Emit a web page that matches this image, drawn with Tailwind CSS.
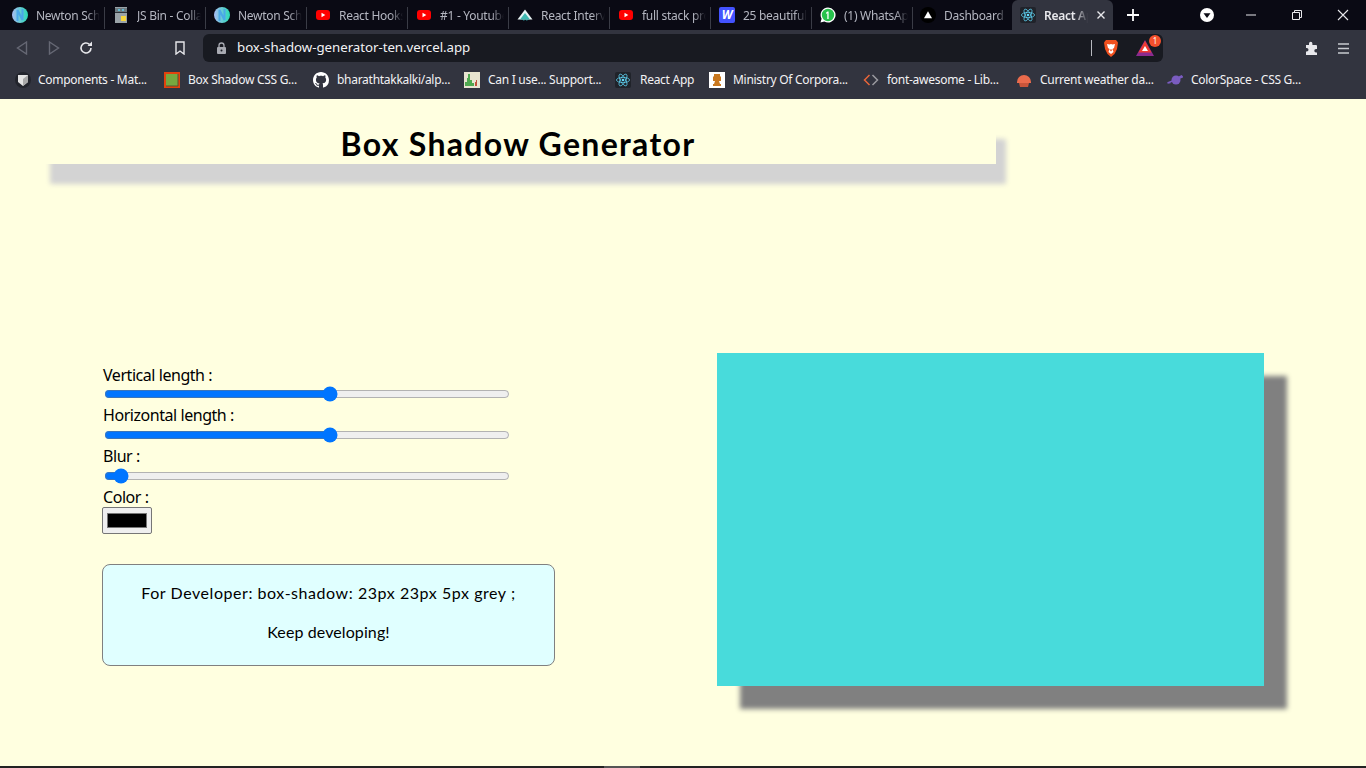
<!DOCTYPE html>
<html lang="en">
<head>
<meta charset="utf-8">
<title>React App</title>
<script src="https://cdn.jsdelivr.net/npm/@tailwindcss/browser@4"></script>
</head>
<body class="h-screen w-screen overflow-hidden flex flex-col bg-[#ffffe0] font-['Noto_Sans','Open_Sans',sans-serif] text-black">
<svg class="absolute w-0 h-0">
  <defs><linearGradient id="ng" x1="0" x2="1"><stop offset="0" stop-color="#a8bcf4"/><stop offset="1" stop-color="#28dcb4"/></linearGradient></defs>
  <symbol id="newton" viewBox="0 0 16 16"><circle cx="8" cy="8" r="8" fill="url(#ng)"/><path d="M5.500 14V3l5 10V2" fill="none" stroke="#4aa8e8" stroke-width="2"/></symbol>
  <symbol id="yt" viewBox="0 0 16 16"><rect x="1" y="3" width="14" height="10" rx="3" fill="#f00"/><path d="M6.500 5.800v4.400L10.300 8z" fill="#fff"/></symbol>
  <symbol id="react" viewBox="0 0 16 16"><rect width="16" height="16" rx="2" fill="#20232a"/><g fill="none" stroke="#61dafb" stroke-width=".7"><ellipse cx="8" cy="8" rx="6.600" ry="2.600"/><ellipse cx="8" cy="8" rx="6.600" ry="2.600" transform="rotate(60 8 8)"/><ellipse cx="8" cy="8" rx="6.600" ry="2.600" transform="rotate(120 8 8)"/></g><circle cx="8" cy="8" r="1.300" fill="#61dafb"/></symbol>
</svg>

<!-- Tab strip -->
<div class="h-[30px] shrink-0 bg-[#0a0a14] flex items-stretch pl-[4px] text-[12px] tracking-[-0.28px] text-[#b4b6c0] relative">
  <div class="w-[101px] relative flex items-center pl-[8px] after:absolute after:right-0 after:top-[7px] after:h-[22px] after:w-px after:bg-[#3a3c46]">
    <svg class="w-4 h-4 shrink-0" viewBox="0 0 16 16"><use href="#newton"/></svg>
    <span class="ml-[8px] pt-px w-[64px] overflow-hidden whitespace-nowrap [mask-image:linear-gradient(to_right,black_80%,transparent)]">Newton School</span>
  </div>
  <div class="w-[101px] relative flex items-center pl-[8px] after:absolute after:right-0 after:top-[7px] after:h-[22px] after:w-px after:bg-[#3a3c46]">
    <svg class="w-4 h-4 shrink-0" viewBox="0 0 16 16"><rect x="2" y="0" width="12" height="16" fill="#9aa3a8"/><rect x="2" y="5" width="12" height="1" fill="#2c3338"/><rect x="2" y="1" width="12" height="4" fill="#6d7a80"/><circle cx="6" cy="3" r="1" fill="#5fd0f0"/><circle cx="10" cy="3" r="1" fill="#5fd0f0"/><rect x="8" y="9" width="5" height="5" fill="#f5d63d"/></svg>
    <span class="ml-[8px] pt-px w-[64px] overflow-hidden whitespace-nowrap [mask-image:linear-gradient(to_right,black_80%,transparent)]">JS Bin - Collaborative</span>
  </div>
  <div class="w-[101px] relative flex items-center pl-[8px] after:absolute after:right-0 after:top-[7px] after:h-[22px] after:w-px after:bg-[#3a3c46]">
    <svg class="w-4 h-4 shrink-0" viewBox="0 0 16 16"><use href="#newton"/></svg>
    <span class="ml-[8px] pt-px w-[64px] overflow-hidden whitespace-nowrap [mask-image:linear-gradient(to_right,black_80%,transparent)]">Newton School</span>
  </div>
  <div class="w-[101px] relative flex items-center pl-[8px] after:absolute after:right-0 after:top-[7px] after:h-[22px] after:w-px after:bg-[#3a3c46]">
    <svg class="w-4 h-4 shrink-0" viewBox="0 0 16 16"><use href="#yt"/></svg>
    <span class="ml-[8px] pt-px w-[64px] overflow-hidden whitespace-nowrap [mask-image:linear-gradient(to_right,black_80%,transparent)]">React Hooks</span>
  </div>
  <div class="w-[101px] relative flex items-center pl-[8px] after:absolute after:right-0 after:top-[7px] after:h-[22px] after:w-px after:bg-[#3a3c46]">
    <svg class="w-4 h-4 shrink-0" viewBox="0 0 16 16"><use href="#yt"/></svg>
    <span class="ml-[8px] pt-px w-[64px] overflow-hidden whitespace-nowrap [mask-image:linear-gradient(to_right,black_80%,transparent)]">#1 - Youtube clone</span>
  </div>
  <div class="w-[101px] relative flex items-center pl-[8px] after:absolute after:right-0 after:top-[7px] after:h-[22px] after:w-px after:bg-[#3a3c46]">
    <svg class="w-4 h-4 shrink-0" viewBox="0 0 16 16"><path d="M8 2.500 15.500 12.500H.5z" fill="#e8f4f4"/><path d="M8 6 3 12.500h10z" fill="#3fb8b0"/><path d="M6 12.500h1.500L7 14zM9 12.500h1.500L10 14z" fill="#35d0d0"/></svg>
    <span class="ml-[8px] pt-px w-[64px] overflow-hidden whitespace-nowrap [mask-image:linear-gradient(to_right,black_80%,transparent)]">React Interview</span>
  </div>
  <div class="w-[101px] relative flex items-center pl-[8px] after:absolute after:right-0 after:top-[7px] after:h-[22px] after:w-px after:bg-[#3a3c46]">
    <svg class="w-4 h-4 shrink-0" viewBox="0 0 16 16"><use href="#yt"/></svg>
    <span class="ml-[8px] pt-px w-[64px] overflow-hidden whitespace-nowrap [mask-image:linear-gradient(to_right,black_80%,transparent)]">full stack projects</span>
  </div>
  <div class="w-[101px] relative flex items-center pl-[8px] after:absolute after:right-0 after:top-[7px] after:h-[22px] after:w-px after:bg-[#3a3c46]">
    <span class="w-4 h-4 shrink-0 rounded-[2px] bg-[#4353ff] text-white font-bold italic text-[12px] leading-4 text-center">W</span>
    <span class="ml-[8px] pt-px w-[64px] overflow-hidden whitespace-nowrap [mask-image:linear-gradient(to_right,black_80%,transparent)]">25 beautiful websites</span>
  </div>
  <div class="w-[101px] relative flex items-center pl-[8px] after:absolute after:right-0 after:top-[7px] after:h-[22px] after:w-px after:bg-[#3a3c46]">
    <svg class="w-4 h-4 shrink-0" viewBox="0 0 16 16"><path d="M8 .5a7.500 7.500 0 0 0-6.400 11.300L.5 15.500l3.800-1A7.500 7.500 0 1 0 8 .5z" fill="#fff"/><circle cx="8" cy="8" r="6.200" fill="#27c24c"/><path d="M8.600 12V4.600H7.500L6 5.800v1.100l1.300-.8V12z" fill="#fff"/></svg>
    <span class="ml-[8px] pt-px w-[64px] overflow-hidden whitespace-nowrap [mask-image:linear-gradient(to_right,black_80%,transparent)]">(1) WhatsApp</span>
  </div>
  <div class="w-[99px] flex items-center pl-[7px]">
    <svg class="w-4 h-4 shrink-0" viewBox="0 0 16 16"><circle cx="8" cy="8" r="8" fill="#000"/><path d="M8 4.200 12 11.200H4z" fill="#fff"/></svg>
    <span class="ml-[8px] pt-px w-[62px] overflow-hidden whitespace-nowrap [mask-image:linear-gradient(to_right,black_85%,transparent)]">Dashboard - Vercel</span>
  </div>
  <div class="w-[101px] h-[30px] flex items-center pl-[8px] bg-[#32343f] rounded-t-[6px] text-[#e8e8ec] font-semibold">
    <svg class="w-4 h-4 shrink-0" viewBox="0 0 16 16"><use href="#react"/></svg>
    <span class="ml-[8px] pt-px w-[44px] overflow-hidden whitespace-nowrap [mask-image:linear-gradient(to_right,black_70%,transparent)]">React App</span>
    <svg class="w-[10px] h-[10px] ml-[8px] shrink-0" viewBox="0 0 10 10"><path d="M1.500 1.500l7 7M8.500 1.500l-7 7" stroke="#e8e8ec" stroke-width="1.400"/></svg>
  </div>
  <svg class="w-[12px] h-[12px] ml-[14px] self-center shrink-0" viewBox="0 0 12 12"><path d="M6 0v12M0 6h12" stroke="#fff" stroke-width="1.800"/></svg>
  <div class="ml-auto flex items-center">
    <svg class="w-[14px] h-[14px] mr-[31px]" viewBox="0 0 14 14"><circle cx="7" cy="7" r="7" fill="#fff"/><path d="M3.500 5.200h7L7 10z" fill="#0a0a14"/></svg>
    <svg class="w-[12px] h-[12px] mr-[34px]" viewBox="0 0 12 12"><path d="M1 6h10" stroke="#e8e8ec"/></svg>
    <svg class="w-[12px] h-[12px] mr-[34px]" viewBox="0 0 12 12"><path d="M1.500 3.500h7v7h-7zM3.500 3.500v-2h7v7h-2" fill="none" stroke="#e8e8ec"/></svg>
    <svg class="w-[12px] h-[12px] mr-[17px]" viewBox="0 0 12 12"><path d="M1 1l10 10M11 1 1 11" stroke="#e8e8ec" stroke-width="1.100"/></svg>
  </div>
</div>

<!-- Toolbar -->
<div class="h-[34px] shrink-0 bg-[#32343f] flex items-center pt-[2px]">
  <svg class="w-[12px] h-[14px] ml-[16px] shrink-0" viewBox="0 0 12 14"><path d="M10.500 1 1.500 7l9 6z" fill="none" stroke="#666874" stroke-width="1.400"/></svg>
  <svg class="w-[12px] h-[14px] ml-[20px] shrink-0" viewBox="0 0 12 14"><path d="M1.500 1l9 6-9 6z" fill="none" stroke="#666874" stroke-width="1.400"/></svg>
  <svg class="w-[14px] h-[14px] ml-[19px] shrink-0" viewBox="0 0 14 14"><path d="M12 7a5 5 0 1 1-1.600-3.700" fill="none" stroke="#e8e8ec" stroke-width="1.600"/><path d="M13 .5V5H8.500z" fill="#e8e8ec"/></svg>
  <svg class="w-[12px] h-[14px] ml-[81px] shrink-0" viewBox="0 0 12 14"><path d="M2 1h8v12L6 10l-4 3z" fill="none" stroke="#e8e8ec" stroke-width="1.400"/></svg>
  <div class="ml-[17px] w-[960px] h-[28px] rounded-[6px] bg-[#181a21] flex items-center shrink-0">
    <svg class="w-[11px] h-[12px] ml-[13px] shrink-0" viewBox="0 0 11 12"><path d="M3 5V3.500a2.500 2.500 0 0 1 5 0V5" fill="none" stroke="#a8aab2" stroke-width="1.300"/><rect x="1" y="5" width="9" height="7" rx="1" fill="#a8aab2"/><circle cx="5.500" cy="8.500" r="1" fill="#181a21"/></svg>
    <span class="ml-[10px] text-[13.3px] tracking-[-0.05px] text-[#f2f2f4] whitespace-nowrap">box-shadow-generator-ten.vercel.app</span>
    <div class="ml-auto w-px h-[16px] bg-[#b8bac0]"></div>
    <svg class="w-[16px] h-[18px] ml-[11px] shrink-0" viewBox="0 0 16 18"><path d="M3 1h10l2 2.500-1 6.500-2.500 5L8 18l-3.500-3L2 10 1 3.500z" fill="#f1501e"/><path d="M4 5l2.500.5L8 5l1.500.5L12 5l-1 4-1.500 1L10.500 13 8 15l-2.500-2L6.500 10 5 9z" fill="#fff"/><path d="M6.500 10.500h3L8 12.500z" fill="#f1501e"/></svg>
    <div class="relative ml-[17px] mr-[9px] w-[18px] h-[16px] shrink-0">
      <svg class="w-[18px] h-[16px]" viewBox="0 0 18 16"><path d="M9 0l9 16H0z" fill="#8b2a8f"/><path d="M9 1 15.500 12.500H2.500z" fill="#ef3c31"/><path d="M9 6l3 5H6z" fill="#fff"/></svg>
      <span class="absolute top-[-5px] right-[-7px] w-[12px] h-[12px] rounded-full bg-[#f4502c] text-white text-[8px] leading-[12px] text-center">1</span>
    </div>
  </div>
  <svg class="w-[15px] h-[15px] ml-[141px] shrink-0" viewBox="0 0 15 15"><path d="M5 2.500a1.700 1.700 0 0 1 3.400 0V4H12a1 1 0 0 1 1 1v3h-1a1.700 1.700 0 0 0 0 3.400h1V14H2v-3.500h.7a1.800 1.800 0 0 0 0-3.600H2V4h3z" fill="#e8e8ec"/></svg>
  <svg class="w-[11px] h-[11px] ml-[19px] shrink-0" viewBox="0 0 11 11"><path d="M0 1h11M0 5.500h11M0 10h11" stroke="#c8cad0" stroke-width="1.500"/></svg>
</div>

<!-- Bookmarks -->
<div class="h-[35px] shrink-0 bg-[#32343f] flex items-center pl-[15px] pb-[3px] text-[12px] tracking-[-0.28px] text-[#f2f2f4] whitespace-nowrap">
  <div class="w-[149px] flex items-center gap-[7px]"><svg class="w-4 h-4 shrink-0" viewBox="0 0 16 16"><circle cx="8" cy="8" r="8" fill="#22242c"/><path d="M3 3h10v7l-5 4-5-4z" fill="#e4e4e4"/><path d="M8 7l5-4v7l-5 4z" fill="#a8a8a8"/></svg><span>Components - Mat...</span></div>
  <div class="w-[149px] flex items-center gap-[8px]"><svg class="w-4 h-4 shrink-0" viewBox="0 0 16 16"><rect width="16" height="16" fill="#e2420d"/><rect x="2" y="2" width="12" height="12" fill="#76a83f"/><path d="M14 2v12H2" fill="none" stroke="#5b5230" stroke-width="1"/></svg><span>Box Shadow CSS G...</span></div>
  <div class="w-[151px] flex items-center gap-[8px]"><svg class="w-4 h-4 shrink-0" viewBox="0 0 16 16"><path fill="#fff" d="M8 0C3.580 0 0 3.580 0 8c0 3.540 2.290 6.530 5.470 7.590.4.070.55-.17.55-.38 0-.19-.010-.82-.010-1.490-2.010.37-2.530-.49-2.690-.94-.09-.23-.48-.94-.82-1.130-.28-.15-.68-.52-.010-.53.630-.010 1.080.58 1.230.82.720 1.210 1.870.87 2.330.66.070-.52.280-.87.510-1.070-1.780-.2-3.640-.89-3.640-3.950 0-.87.310-1.590.82-2.150-.080-.2-.36-1.020.080-2.120 0 0 .67-.21 2.200.82.640-.18 1.320-.27 2-.27s1.360.09 2 .27c1.530-1.040 2.200-.82 2.200-.82.440 1.100.160 1.920.080 2.120.51.560.82 1.270.82 2.150 0 3.070-1.870 3.750-3.650 3.950.29.250.54.730.54 1.480 0 1.070-.010 1.930-.010 2.200 0 .21.150.46.55.38A8.010 8.010 0 0 0 16 8c0-4.420-3.580-8-8-8z"/></svg><span>bharathtakkalki/alp...</span></div>
  <div class="w-[151px] flex items-center gap-[8px]"><svg class="w-4 h-4 shrink-0" viewBox="0 0 16 16"><rect width="16" height="16" fill="#e8e4d0"/><path d="M1 14V10h2V6h1V2h2v6h2v3h2v3z" fill="#4fa84f"/><path d="M11 14v-4h1v-2h1v6z" fill="#c0503a"/></svg><span>Can I use... Support...</span></div>
  <div class="w-[94px] flex items-center gap-[9px]"><svg class="w-4 h-4 shrink-0" viewBox="0 0 16 16"><use href="#react"/></svg><span>React App</span></div>
  <div class="w-[154px] flex items-center gap-[8px]"><svg class="w-4 h-4 shrink-0" viewBox="0 0 16 16"><rect width="16" height="16" fill="#fff"/><path d="M5 2h6v2l1 1v4h-2l1 3h1v2H4v-2h1l1-3H4V5l1-1z" fill="#c9781f"/></svg><span>Ministry Of Corpora...</span></div>
  <div class="w-[153px] flex items-center gap-[8px]"><svg class="w-4 h-4 shrink-0" viewBox="0 0 16 16"><path d="M6.500 3 1.500 8l5 5" fill="none" stroke="#e8663a" stroke-width="1.500"/><path d="M9.500 3l5 5-5 5" fill="none" stroke="#9a9aa0" stroke-width="1.500"/></svg><span>font-awesome - Lib...</span></div>
  <div class="w-[151px] flex items-center gap-[8px]"><svg class="w-4 h-4 shrink-0" viewBox="0 0 16 16"><path d="M1 10a7 7 0 0 1 14 0v1H1z" fill="#ea6b4c"/><path d="M3 11h10l-1 4H4z" fill="#c9553a"/></svg><span>Current weather da...</span></div>
  <div class="flex items-center gap-[8px]"><svg class="w-4 h-4 shrink-0" viewBox="0 0 16 16"><circle cx="9" cy="8" r="4.500" fill="#7a5cc0"/><path d="M.5 11 15.500 5l-1-1-3 1.500M.5 11l3-.5" fill="none" stroke="#7a5cc0" stroke-width="1.500"/></svg><span>ColorSpace - CSS G...</span></div>
</div>

<!-- Page -->
<main class="flex-1 min-h-0 flex flex-col">
  <h1 class="mt-[20px] ml-[40px] w-[956px] h-[45px] shrink-0 text-center text-[32px] leading-[50px] font-bold tracking-[1.300px] font-['Lato',sans-serif] shadow-[10px_20px_5px_#d3d3d3]">Box Shadow Generator</h1>
  <div class="mt-[189px] flex pl-[102px]">
    <div class="w-[453px] mt-[11px] shrink-0">
      <label class="block text-[16px] leading-[21px] tracking-[-0.45px] pl-px pt-px -mb-px">Vertical length :</label>
      <input type="range" min="-50" max="80.500" step="0.500" value="23" class="block w-[406px] h-[16px] mx-[2px] mt-[1px] mb-[3px]">
      <label class="block text-[16px] leading-[21px] tracking-[-0.45px] pl-px -mb-px">Horizontal length :</label>
      <input type="range" min="-50" max="80.500" step="0.500" value="23" class="block w-[406px] h-[16px] mx-[2px] mt-[2px] mb-[3px]">
      <label class="block text-[16px] leading-[21px] tracking-[-0.45px] pl-px -mb-px">Blur :</label>
      <input type="range" min="0" max="220" value="5" class="block w-[406px] h-[16px] mx-[2px] mt-[2px] mb-[3px]">
      <label class="block text-[16px] leading-[21px] tracking-[-0.45px] pl-px -mb-px">Color :</label>
      <input type="color" value="#000000" class="block w-[50px] h-[27px] bg-[#efefef] border border-[#767676] rounded-[2px] px-[2px] py-[1px]">
      <div class="mt-[30px] w-[453px] h-[102px] rounded-[8px] border border-[#808080] bg-[#e0ffff] text-center font-['Lato',sans-serif] text-[16px] tracking-[0.55px] pt-[17px]">
        <p class="leading-[22px]">For Developer: box-shadow: 23px 23px 5px grey ;</p>
        <p class="leading-[22px] mt-[17px] tracking-[0.1px]">Keep developing!</p>
      </div>
    </div>
    <div class="ml-[162px] w-[547px] h-[333px] shrink-0 bg-[#48dbdb] shadow-[23px_23px_5px_grey]"></div>
  </div>
</main>
<div class="h-[2px] shrink-0 bg-[#222] flex"><div class="ml-[604px] w-[36px] bg-[#555]"></div></div>
</body>
</html>
